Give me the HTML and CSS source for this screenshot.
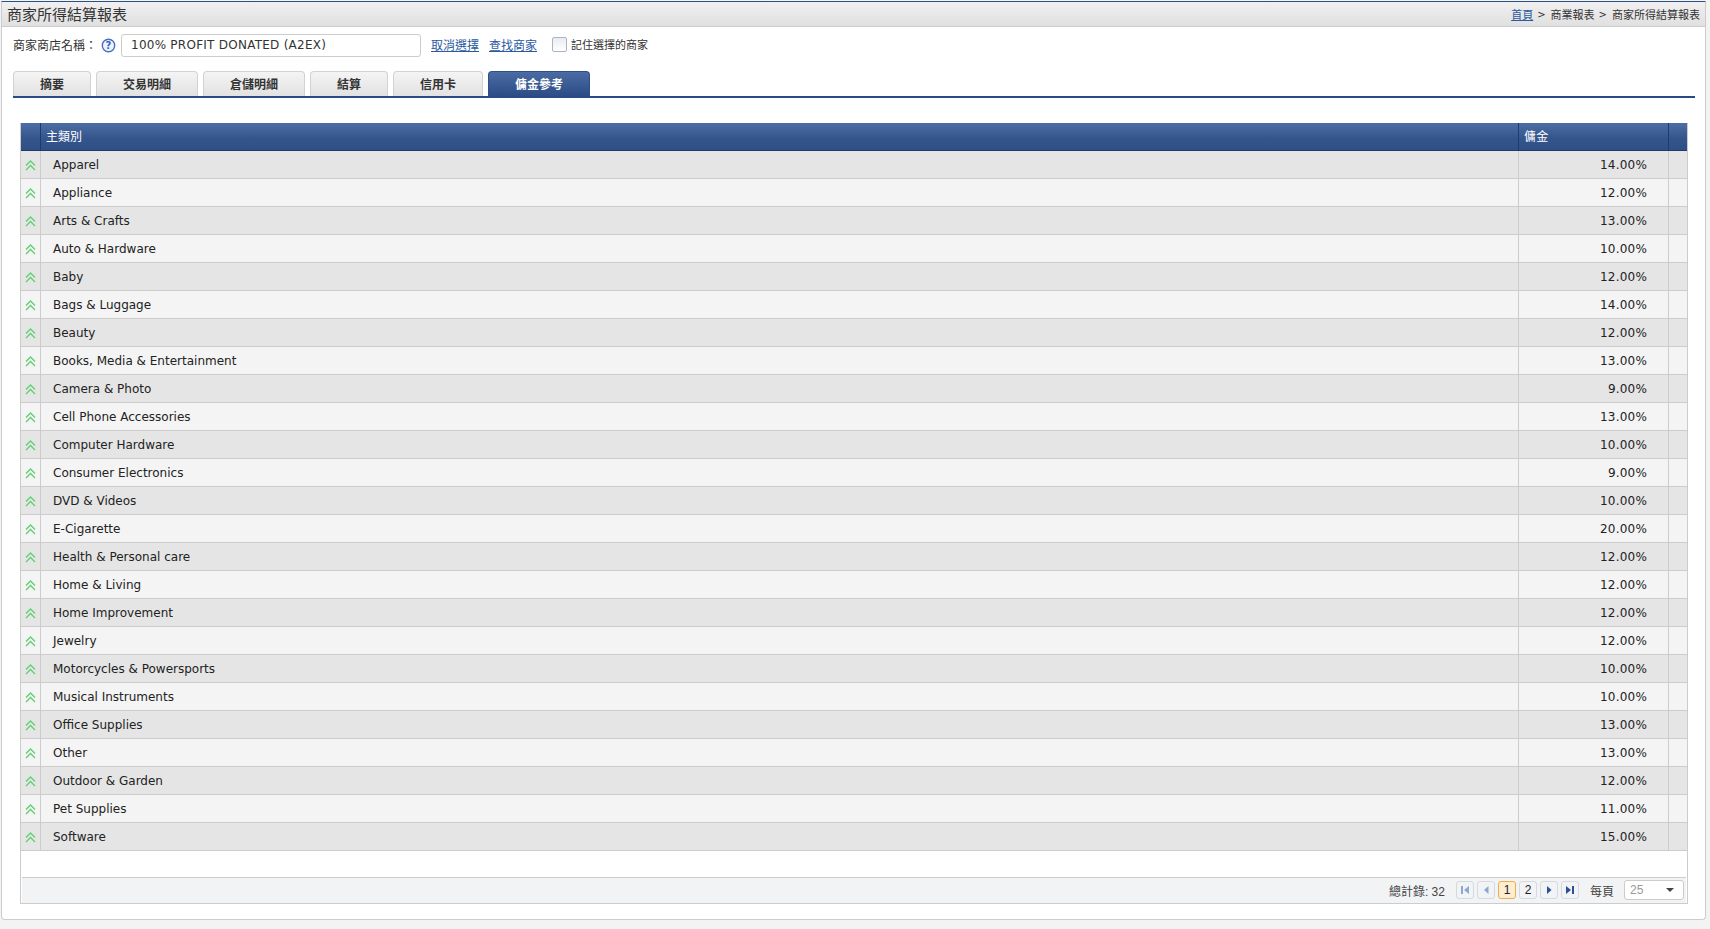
FILE: index.html
```html
<!DOCTYPE html>
<html lang="zh-Hant">
<head>
<meta charset="utf-8">
<title>商家所得結算報表</title>
<link rel="stylesheet" href="styles.css">
</head>
<body>
<svg class="defs" width="0" height="0"><defs>
<symbol id="up" viewBox="0 0 11 11"><path d="M1 5.5 5.5 1 10 5.5M1 10 5.5 5.5 10 10" fill="none" stroke="#5fd06f" stroke-width="1.3"/></symbol>
</defs></svg>
<div class="panel">
  <header class="head">
    <h1 class="title">商家所得結算報表</h1>
    <nav class="crumbs"><a href="#">首頁</a><span class="sep">&gt;</span><span>商業報表</span><span class="sep">&gt;</span><span>商家所得結算報表</span></nav>
  </header>
  <div class="content">
    <div class="filter">
      <span class="flabel">商家商店名稱：</span>
      <svg class="help" width="15" height="15" viewBox="0 0 15 15"><circle cx="7.5" cy="7.5" r="6.2" fill="#eef2fb" stroke="#4a6fc4" stroke-width="1.4"/><text x="7.5" y="11" text-anchor="middle" class="helpq">?</text></svg>
      <div class="store">100% PROFIT DONATED (A2EX)</div>
      <a class="flink first" href="#">取消選擇</a>
      <a class="flink second" href="#">查找商家</a>
      <span class="check"></span>
      <span class="remember">記住選擇的商家</span>
    </div>
    <div class="tabs">
      <div class="tab w1">摘要</div>
      <div class="tab w2">交易明細</div>
      <div class="tab w2">倉儲明細</div>
      <div class="tab w3">結算</div>
      <div class="tab w4">信用卡</div>
      <div class="tab w2 active">傭金參考</div>
    </div>
    <div class="grid">
      <div class="row hrow">
        <div class="c0"></div><div class="c1">主類別</div><div class="c2">傭金</div><div class="c3"></div>
      </div>
      <div class="row"><div class="c0"><svg class="up"><use href="#up"/></svg></div><div class="c1">Apparel</div><div class="c2">14.00%</div><div class="c3"></div></div>
      <div class="row"><div class="c0"><svg class="up"><use href="#up"/></svg></div><div class="c1">Appliance</div><div class="c2">12.00%</div><div class="c3"></div></div>
      <div class="row"><div class="c0"><svg class="up"><use href="#up"/></svg></div><div class="c1">Arts &amp; Crafts</div><div class="c2">13.00%</div><div class="c3"></div></div>
      <div class="row"><div class="c0"><svg class="up"><use href="#up"/></svg></div><div class="c1">Auto &amp; Hardware</div><div class="c2">10.00%</div><div class="c3"></div></div>
      <div class="row"><div class="c0"><svg class="up"><use href="#up"/></svg></div><div class="c1">Baby</div><div class="c2">12.00%</div><div class="c3"></div></div>
      <div class="row"><div class="c0"><svg class="up"><use href="#up"/></svg></div><div class="c1">Bags &amp; Luggage</div><div class="c2">14.00%</div><div class="c3"></div></div>
      <div class="row"><div class="c0"><svg class="up"><use href="#up"/></svg></div><div class="c1">Beauty</div><div class="c2">12.00%</div><div class="c3"></div></div>
      <div class="row"><div class="c0"><svg class="up"><use href="#up"/></svg></div><div class="c1">Books, Media &amp; Entertainment</div><div class="c2">13.00%</div><div class="c3"></div></div>
      <div class="row"><div class="c0"><svg class="up"><use href="#up"/></svg></div><div class="c1">Camera &amp; Photo</div><div class="c2">9.00%</div><div class="c3"></div></div>
      <div class="row"><div class="c0"><svg class="up"><use href="#up"/></svg></div><div class="c1">Cell Phone Accessories</div><div class="c2">13.00%</div><div class="c3"></div></div>
      <div class="row"><div class="c0"><svg class="up"><use href="#up"/></svg></div><div class="c1">Computer Hardware</div><div class="c2">10.00%</div><div class="c3"></div></div>
      <div class="row"><div class="c0"><svg class="up"><use href="#up"/></svg></div><div class="c1">Consumer Electronics</div><div class="c2">9.00%</div><div class="c3"></div></div>
      <div class="row"><div class="c0"><svg class="up"><use href="#up"/></svg></div><div class="c1">DVD &amp; Videos</div><div class="c2">10.00%</div><div class="c3"></div></div>
      <div class="row"><div class="c0"><svg class="up"><use href="#up"/></svg></div><div class="c1">E-Cigarette</div><div class="c2">20.00%</div><div class="c3"></div></div>
      <div class="row"><div class="c0"><svg class="up"><use href="#up"/></svg></div><div class="c1">Health &amp; Personal care</div><div class="c2">12.00%</div><div class="c3"></div></div>
      <div class="row"><div class="c0"><svg class="up"><use href="#up"/></svg></div><div class="c1">Home &amp; Living</div><div class="c2">12.00%</div><div class="c3"></div></div>
      <div class="row"><div class="c0"><svg class="up"><use href="#up"/></svg></div><div class="c1">Home Improvement</div><div class="c2">12.00%</div><div class="c3"></div></div>
      <div class="row"><div class="c0"><svg class="up"><use href="#up"/></svg></div><div class="c1">Jewelry</div><div class="c2">12.00%</div><div class="c3"></div></div>
      <div class="row"><div class="c0"><svg class="up"><use href="#up"/></svg></div><div class="c1">Motorcycles &amp; Powersports</div><div class="c2">10.00%</div><div class="c3"></div></div>
      <div class="row"><div class="c0"><svg class="up"><use href="#up"/></svg></div><div class="c1">Musical Instruments</div><div class="c2">10.00%</div><div class="c3"></div></div>
      <div class="row"><div class="c0"><svg class="up"><use href="#up"/></svg></div><div class="c1">Office Supplies</div><div class="c2">13.00%</div><div class="c3"></div></div>
      <div class="row"><div class="c0"><svg class="up"><use href="#up"/></svg></div><div class="c1">Other</div><div class="c2">13.00%</div><div class="c3"></div></div>
      <div class="row"><div class="c0"><svg class="up"><use href="#up"/></svg></div><div class="c1">Outdoor &amp; Garden</div><div class="c2">12.00%</div><div class="c3"></div></div>
      <div class="row"><div class="c0"><svg class="up"><use href="#up"/></svg></div><div class="c1">Pet Supplies</div><div class="c2">11.00%</div><div class="c3"></div></div>
      <div class="row"><div class="c0"><svg class="up"><use href="#up"/></svg></div><div class="c1">Software</div><div class="c2">15.00%</div><div class="c3"></div></div>
      <div class="blank"></div>
      <div class="pager">
        <span class="total">總計錄: 32</span>
        <span class="pbtn"><svg width="10" height="10" viewBox="0 0 10 10"><path d="M1 1h2v8H1zM9 1v8L4 5z" fill="#8ba8d0"/></svg></span>
        <span class="pbtn"><svg width="10" height="10" viewBox="0 0 10 10"><path d="M7.5 1v8L3 5z" fill="#8ba8d0"/></svg></span>
        <span class="pbtn cur">1</span>
        <span class="pbtn">2</span>
        <span class="pbtn"><svg width="10" height="10" viewBox="0 0 10 10"><path d="M3 1v8l4.5-4z" fill="#2a5198"/></svg></span>
        <span class="pbtn"><svg width="10" height="10" viewBox="0 0 10 10"><path d="M1 1v8l5-4zM7 1h2v8H7z" fill="#2a5198"/></svg></span>
        <span class="per">每頁</span>
        <span class="size">25<i class="caret"></i></span>
      </div>
    </div>
  </div>
</div>
</body>
</html>
```
FILE: styles.css
```css
* { box-sizing: border-box; }
html, body { margin: 0; height: 100%; }
body {
  background: #f3f3f3;
  font: 12px "DejaVu Sans", "Noto Sans CJK TC", sans-serif;
  color: #222;
  padding: 1px 4px 0 1px;
}
.defs { display: block; height: 0; }
a { color: #2a5aa0; text-decoration: underline; }
.panel {
  height: 919px;
  background: #fff;
  border: 1px solid #ccc;
  border-top: 1px solid #2f4f87;
  border-radius: 0 0 4px 4px;
}
.head {
  height: 25px;
  display: flex;
  align-items: center;
  justify-content: space-between;
  padding: 1px 5px 1px 5px;
  background: linear-gradient(#f0f0f0, #e0e0e0);
  border-bottom: 1px solid #ccc;
}
.title { margin: 0 0 2px; font-size: 15px; font-weight: 400; color: #333; }
.crumbs { display: flex; align-items: center; font-size: 11px; color: #333; }
.sep { margin: 0 5px 0 4px; font-size: 10px; }
.content { padding: 0 10px 0 11px; }
.filter { height: 32px; margin-top: 2px; display: flex; align-items: center; }
.flabel { width: 88px; margin-bottom: 2px; white-space: nowrap; color: #333; }
.help { margin-right: 5px; }
.helpq { font: bold 10px "DejaVu Sans", sans-serif; fill: #3b62bd; }
.store {
  width: 300px; height: 23px; line-height: 21px; padding-left: 9px;
  border: 1px solid #ccc; border-radius: 3px; color: #333; letter-spacing: 0.25px;
}
.flink { margin: 0 0 2px 10px; }
.check {
  width: 15px; height: 15px; margin: 0 4px 2px 15px;
  border: 1px solid #a9b4c4; border-radius: 2px;
  background: linear-gradient(#e8ecf2, #fff);
}
.remember { font-size: 11px; margin-bottom: 2px; color: #333; }
.tabs {
  display: flex; gap: 5px; height: 27px; margin-top: 10px;
  border-bottom: 2px solid #2a4a85;
}
.tab {
  height: 25px; line-height: 26px; text-align: center; font-weight: 700; color: #333;
  background: linear-gradient(#f4f4f4, #e2e2e2);
  border: 1px solid #d2d2d2; border-bottom: 0;
  border-radius: 4px 4px 0 0;
}
.w1 { width: 78px; }
.w2 { width: 102px; }
.w3 { width: 78px; }
.w4 { width: 90px; }
.tab.active {
  color: #fff; border-color: #2f4f87;
  background: linear-gradient(#4a6ba3, #2c4c85);
}
.grid {
  margin: 25px 7px 0 7px;
  width: 1668px;
  border: 1px solid #ccc;
  border-top: 0;
  height: 781px;
}
.row {
  display: grid;
  grid-template-columns: 20px 1478px 150px 1fr;
  grid-template-rows: 27px;
  height: 28px;
  background: #e5e5e5;
  border-bottom: 1px solid #ccc;
  line-height: 29px;
}
.row:nth-child(odd) { background: #f4f4f4; }
.row > div { border-right: 1px solid #ccc; white-space: nowrap; }
.row > .c3 { border-right: 0; }
.c0 { display: flex; align-items: center; justify-content: center; padding-top: 1px; }
.c1 { padding-left: 12px; }
.c2 { text-align: right; padding-right: 21px; letter-spacing: 0.2px; }
.up { width: 11px; height: 11px; }
.row.hrow {
  background: linear-gradient(#4a6ba3 0, #4a6ba3 8%, #34568c 55%, #2f5087 100%);
  border-bottom: 1px solid #1f3a6b;
  color: #fff;
}
.hrow > div { border-right: 1px solid #1f3a6b; }
.hrow > .c1 { padding-left: 5px; }
.hrow > .c2 { text-align: left; padding-left: 5px; }
.blank { height: 26px; }
.pager {
  height: 26px; display: flex; align-items: center; justify-content: flex-end;
  padding: 0 2px 1px 0; margin-left: 1px; margin-right: 1px;
  background: #f2f3f5; border-top: 1px solid #ccc; color: #444;
  font-family: "Liberation Sans", "Noto Sans CJK TC", sans-serif;
}
.total { margin-right: 11px; }
.pbtn {
  width: 18px; height: 18px; margin-right: 3px;
  display: flex; align-items: center; justify-content: center;
  border: 1px solid #d5d9e0; border-radius: 3px; color: #222;
}
.pbtn.cur { background: #fdeed3; border-color: #f0ac45; }
.per { margin: 0 10px 0 8px; }
.size {
  width: 60px; height: 20px; padding-left: 5px; line-height: 18px; position: relative;
  background: #fff; border: 1px solid #ccc; border-radius: 3px; color: #999;
}
.caret {
  position: absolute; right: 9px; top: 7px;
  border: 4px solid transparent; border-top-color: #444; border-bottom: 0;
}
```
